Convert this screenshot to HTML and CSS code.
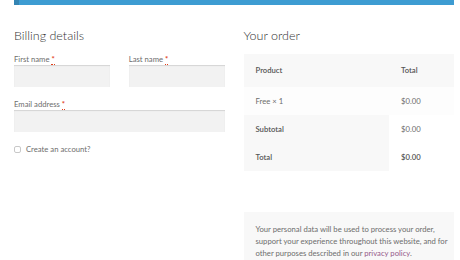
FILE: index.html
```html
<!DOCTYPE html>
<html lang="en">
<head>
  <meta charset="UTF-8" />
  <meta name="viewport" content="width=device-width, initial-scale=1.0" />
  <title>Checkout</title>
  <link rel="stylesheet" href="styles.css">
</head>
<body>
  <div class="notice"></div>

  <form class="checkout">
    <div class="billing">
      <h3>Billing details</h3>

      <div class="row-pair">
        <p class="field">
          <label for="first-name">First name <abbr class="required" title="required">*</abbr></label>
          <input type="text" id="first-name" />
        </p>
        <p class="field">
          <label for="last-name">Last name <abbr class="required" title="required">*</abbr></label>
          <input type="text" id="last-name" />
        </p>
      </div>

      <p class="field">
        <label for="email">Email address <abbr class="required" title="required">*</abbr></label>
        <input type="email" id="email" />
      </p>

      <p class="create-account">
        <label><input type="checkbox" class="check" /> <span>Create an account?</span></label>
      </p>
    </div>

    <div class="review">
      <h3>Your order</h3>

      <table class="order-table">
        <thead>
          <tr>
            <th class="name">Product</th>
            <th class="total">Total</th>
          </tr>
        </thead>
        <tbody>
          <tr>
            <td class="name">Free <strong class="qty">&times;&nbsp;1</strong></td>
            <td class="total">$0.00</td>
          </tr>
        </tbody>
        <tfoot>
          <tr>
            <th>Subtotal</th>
            <td>$0.00</td>
          </tr>
          <tr class="order-total">
            <th>Total</th>
            <td><strong>$0.00</strong></td>
          </tr>
        </tfoot>
      </table>

      <div class="privacy">
        <p>Your personal data will be used to process your order, support your experience throughout this website, and for other purposes described in our <a href="#">privacy policy</a>.</p>
      </div>
    </div>
  </form>
</body>
</html>
```

FILE: styles.css
```css
body {
  font-family: Lato, "Open Sans", sans-serif;
  font-size: 7.7px;
  line-height: 12px;
  background-color: #fff;
  color: #6d6d6d;
  margin: 0;
  padding: 0 6px 0 14px;
  overflow: hidden;
}
.notice {
  height: 5px;
  background-color: #3d9cd2;
  border-left: 5px solid #3485b3;
}
.checkout {
  display: grid;
  grid-template-columns: 1fr 1fr;
  column-gap: 19px;
}
h3 {
  font-size: 12.5px;
  font-weight: 300;
  line-height: 15px;
  color: #333;
  margin: 23px 0 10px;
}
.row-pair {
  display: grid;
  grid-template-columns: 1fr 1fr;
  column-gap: 19px;
}
.field {
  margin: 0 0 11px;
}
.field label {
  display: block;
}
.required {
  color: #e2401c;
  text-decoration: none;
  font-weight: 700;
  border-bottom: 1px dotted #e2401c;
}
.field input {
  display: block;
  box-sizing: border-box;
  width: 100%;
  height: 22px;
  border: 0;
  background-color: #f2f2f2;
  box-shadow: inset 0 1px 1px rgba(0, 0, 0, 0.125);
  margin: 0;
}
.create-account {
  margin: 0;
}
.create-account label {
  display: flex;
  align-items: center;
  gap: 5px;
}
.check {
  appearance: none;
  width: 7px;
  height: 7px;
  margin: 0;
  border: 1px solid #c8c8c8;
  border-radius: 2px;
  background: #fff;
}
.order-table {
  width: 100%;
  border-collapse: collapse;
  margin-top: 11px;
}
.order-table th,
.order-table td {
  text-align: left;
  padding: 8px 11px 8px 12px;
  height: 12px;
}
.order-table th {
  font-weight: 600;
  color: #555;
  background-color: #f8f8f8;
}
.order-table thead th {
  padding-top: 10px;
  padding-bottom: 11px;
}
.order-table td {
  background-color: #fdfdfd;
}
.order-table tfoot td {
  background-color: #fff;
}
.order-table .total {
  width: 42px;
}
.qty {
  font-weight: 400;
}
.order-total td strong {
  color: #555;
  font-weight: 600;
}
.privacy {
  background-color: #f8f8f8;
  margin-top: 41px;
  padding: 11px 4px 11px 12px;
}
.privacy p {
  margin: 0;
}
.privacy a {
  color: #96588a;
  text-decoration: none;
}
```
